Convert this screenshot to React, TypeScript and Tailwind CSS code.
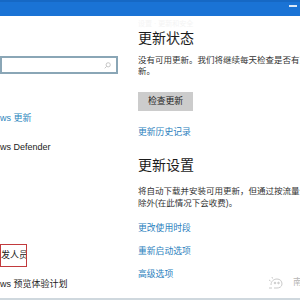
import React from "react";

const font = { fontFamily: '"Liberation Sans", "Noto Sans CJK SC", sans-serif' };

function NavItem({ children, className = "" }: { children: React.ReactNode; className?: string }) {
  return (
    <div className={"h-[14px] flex items-center whitespace-nowrap text-[9px] leading-[14px] " + className}>
      {children}
    </div>
  );
}

function Link({ children, className = "" }: { children: React.ReactNode; className?: string }) {
  return (
    <div className={"h-[12px] leading-[12px] text-[8.8px] text-[#2a80bd] whitespace-nowrap " + className}>
      {children}
    </div>
  );
}

export default function App() {
  return (
    <div className="w-[300px] h-[300px] bg-white overflow-hidden relative flex flex-col" style={font}>
      {/* title bar */}
      <div className="h-[16px] shrink-0 bg-[#1a73d5] border-t-2 border-[#1668c4] flex justify-end items-start pt-[3px] pr-[3px]">
        <div className="w-[8px] h-[2px] bg-[#dbe9f8]" />
      </div>

      <div className="flex flex-1 min-h-0">
        {/* left nav */}
        <div className="w-[138px] shrink-0 flex flex-col overflow-hidden">
          <div className="h-[40px]" />
          <div className="w-[118px] h-[18px] border-2 border-[#8aa6b6] flex items-center justify-end pr-[5px]">
            <svg width="7" height="7" viewBox="0 0 10 10" fill="none" stroke="#c4c4c4" strokeWidth="1.4">
              <circle cx="6" cy="4" r="3" />
              <path d="M3.8 6.2 L1 9" />
            </svg>
          </div>
          <div className="h-[37px]" />
          <NavItem className="text-[#2a86bd]">ws 更新</NavItem>
          <div className="h-[15px]" />
          <NavItem className="text-[#222]">ws Defender</NavItem>
          <div className="h-[90px]" />
          <div className="w-[27px] h-[23px] border-[1.5px] border-[#c23a3d] flex items-center overflow-hidden">
            <span className="text-[9px] text-[#222] whitespace-nowrap">发人员</span>
          </div>
          <div className="h-[10px]" />
          <NavItem className="text-[#222]">ws 预览体验计划</NavItem>
        </div>

        {/* right pane */}
        <div className="flex-1 flex flex-col overflow-hidden">
          <div className="h-[14px] pt-[3px] text-[7px] leading-[9px] text-[#f4f4f4] whitespace-nowrap">设置 · 更新和安全</div>
          <div className="h-[17px] text-[14px] leading-[17px] text-[#1b1b1b] whitespace-nowrap">更新状态</div>
          <div className="h-[8px]" />
          <div className="text-[8.5px] leading-[11px] text-[#333] whitespace-nowrap">
            <div>没有可用更新。我们将继续每天检查是否有更</div>
            <div>新。</div>
          </div>
          <div className="h-[15px]" />
          <div className="w-[55px] h-[19px] bg-[#cccccc] text-[8.8px] text-[#222] flex items-center justify-center">检查更新</div>
          <div className="h-[15px]" />
          <Link>更新历史记录</Link>
          <div className="h-[19px]" />
          <div className="h-[17px] text-[14px] leading-[17px] text-[#1b1b1b] whitespace-nowrap">更新设置</div>
          <div className="h-[11px]" />
          <div className="text-[8.5px] leading-[12px] text-[#333] whitespace-nowrap">
            <div>将自动下载并安装可用更新，但通过按流量计费的连接</div>
            <div>除外(在此情况下会收费)。</div>
          </div>
          <div className="h-[13px]" />
          <Link>更改使用时段</Link>
          <div className="h-[11px]" />
          <Link>重新启动选项</Link>
          <div className="h-[11px]" />
          <Link>高级选项</Link>
        </div>
      </div>

      <div className="h-[2px] shrink-0 bg-[#cfd8de]" />

      {/* watermark */}
      <div className="absolute left-[268px] top-[276px] flex items-center gap-[9px] opacity-70">
        <svg width="16" height="14" viewBox="0 0 16 14" fill="none" stroke="#b5b5b5" strokeWidth="1">
          <path d="M3 9 C3 5 6 3 9 3 C12 3 14 5 14 8 C14 11 11 12 9 12 L6 12" />
          <circle cx="7" cy="7" r="0.8" fill="#b5b5b5" />
          <circle cx="10.5" cy="7" r="0.8" fill="#b5b5b5" />
          <path d="M1 4 L2.5 5 M4 1 L4.5 2.5 M1 12 L4 12" />
        </svg>
        <span className="text-[9px] text-[#9a9a9a]">南</span>
      </div>
    </div>
  );
}
